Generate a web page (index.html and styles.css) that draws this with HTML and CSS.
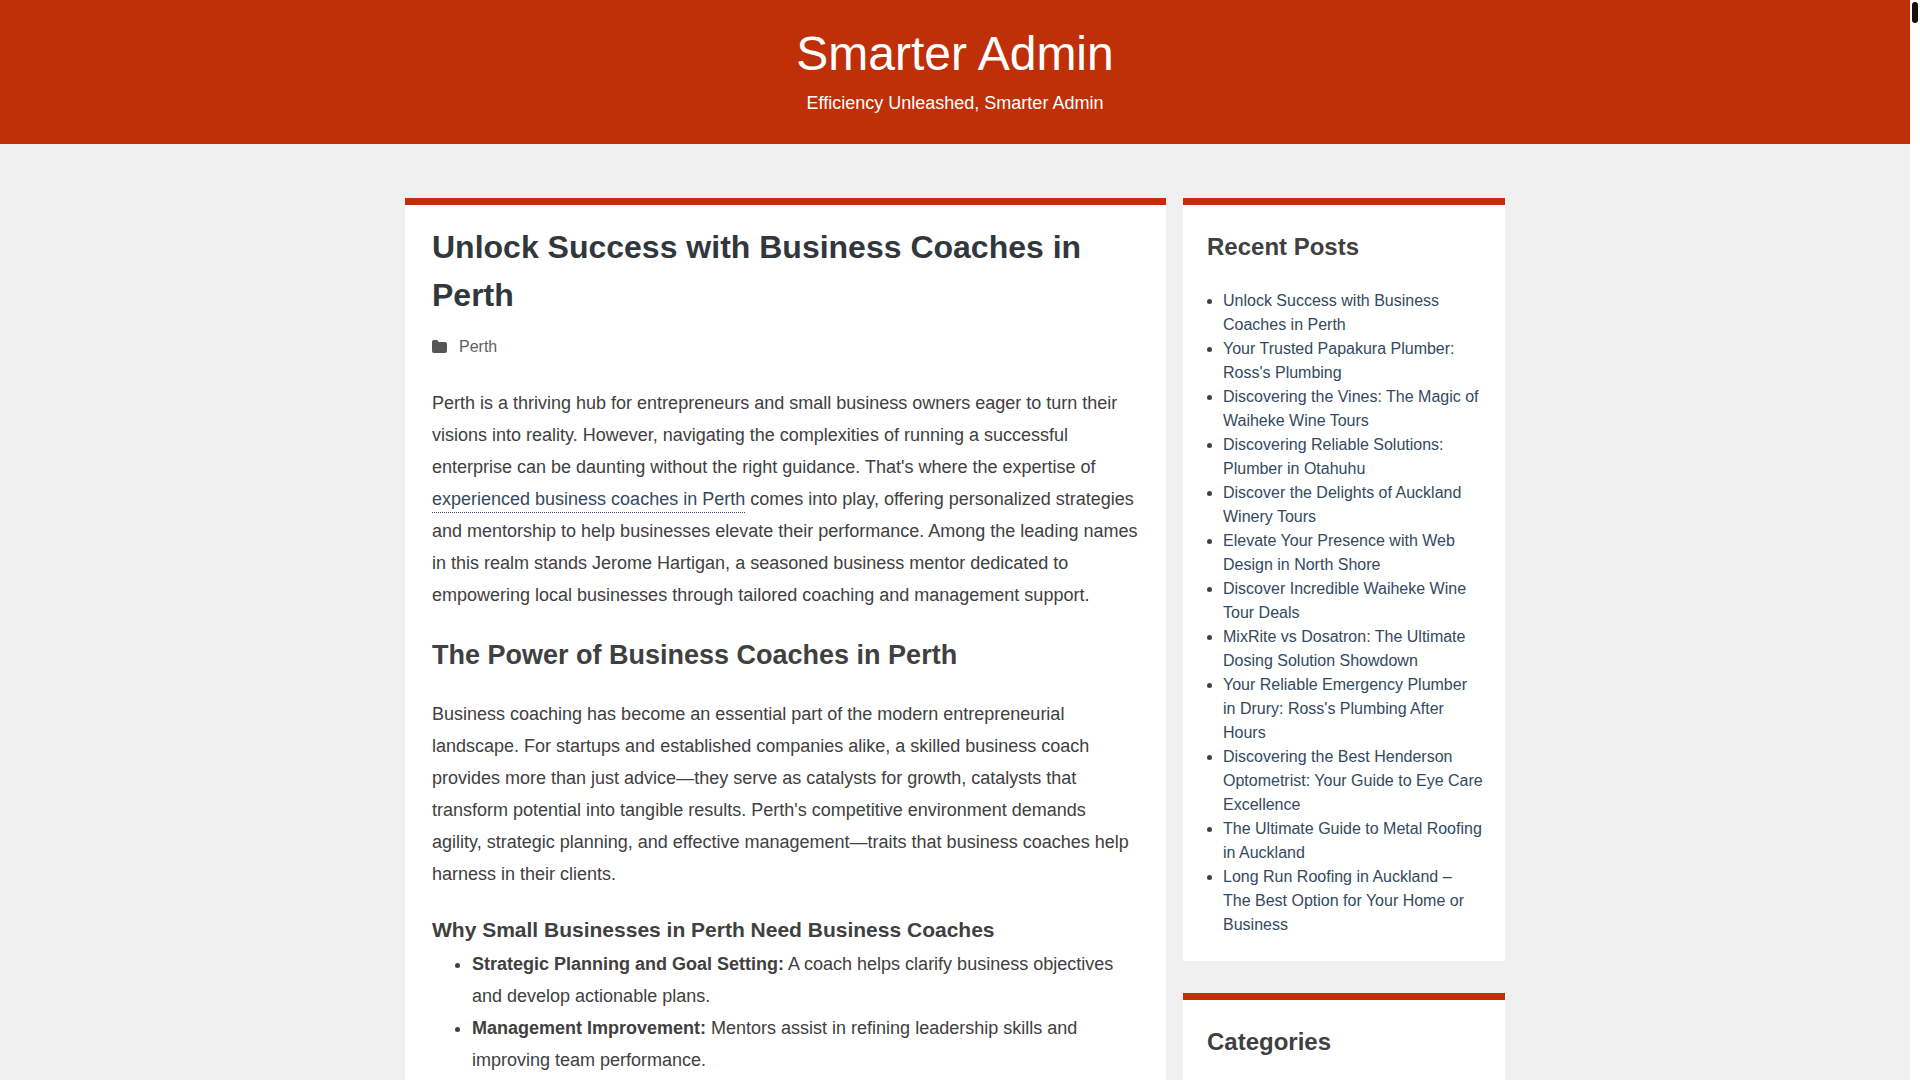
FILE: index.html
```html
<!DOCTYPE html>
<html lang="en">
<head>
    <meta charset="UTF-8">
    <meta name="viewport" content="width=device-width, initial-scale=1.0">
    <title>Unlock Success with Business Coaches in Perth - Smarter Admin</title>
    <link rel="stylesheet" href="styles.css">
</head>
<body>
    <header class="site-header">
        <a class="site-title" href="#">Smarter Admin</a>
        <p class="site-description">Efficiency Unleashed, Smarter Admin</p>
    </header>

    <div class="site-content">
        <main class="post">
            <h1 class="post-title">Unlock Success with Business Coaches in Perth</h1>
            <div class="post-meta">
                <svg class="icon-folder" viewBox="0 0 15 13" aria-hidden="true">
                    <path d="M0 2Q0 0 2 0H4.500Q6.500 0 6.500 2H13Q15 2 15 4V11Q15 13 13 13H2Q0 13 0 11Z"/>
                </svg>
                <a href="#">Perth</a>
            </div>

            <div class="post-content">
                <p>Perth is a thriving hub for entrepreneurs and small business owners eager to turn their visions into reality. However, navigating the complexities of running a successful enterprise can be daunting without the right guidance. That's where the expertise of <a href="#">experienced business coaches in Perth</a> comes into play, offering personalized strategies and mentorship to help businesses elevate their performance. Among the leading names in this realm stands Jerome Hartigan, a seasoned business mentor dedicated to empowering local businesses through tailored coaching and management support.</p>

                <h2>The Power of Business Coaches in Perth</h2>
                <p>Business coaching has become an essential part of the modern entrepreneurial landscape. For startups and established companies alike, a skilled business coach provides more than just advice—they serve as catalysts for growth, catalysts that transform potential into tangible results. Perth's competitive environment demands agility, strategic planning, and effective management—traits that business coaches help harness in their clients.</p>

                <h3>Why Small Businesses in Perth Need Business Coaches</h3>
                <ul>
                    <li><strong>Strategic Planning and Goal Setting:</strong> A coach helps clarify business objectives and develop actionable plans.</li>
                    <li><strong>Management Improvement:</strong> Mentors assist in refining leadership skills and improving team performance.</li>
                </ul>
            </div>
        </main>

        <aside class="sidebar">
            <section class="widget">
                <h2 class="widget-title">Recent Posts</h2>
                <ul>
                    <li><a href="#">Unlock Success with Business Coaches in Perth</a></li>
                    <li><a href="#">Your Trusted Papakura Plumber: Ross's Plumbing</a></li>
                    <li><a href="#">Discovering the Vines: The Magic of Waiheke Wine Tours</a></li>
                    <li><a href="#">Discovering Reliable Solutions: Plumber in Otahuhu</a></li>
                    <li><a href="#">Discover the Delights of Auckland Winery Tours</a></li>
                    <li><a href="#">Elevate Your Presence with Web Design in North Shore</a></li>
                    <li><a href="#">Discover Incredible Waiheke Wine Tour Deals</a></li>
                    <li><a href="#">MixRite vs Dosatron: The Ultimate Dosing Solution Showdown</a></li>
                    <li><a href="#">Your Reliable Emergency Plumber in Drury: Ross's Plumbing After Hours</a></li>
                    <li><a href="#">Discovering the Best Henderson Optometrist: Your Guide to Eye Care Excellence</a></li>
                    <li><a href="#">The Ultimate Guide to Metal Roofing in Auckland</a></li>
                    <li><a href="#">Long Run Roofing in Auckland – The Best Option for Your Home or Business</a></li>
                </ul>
            </section>
            <section class="widget">
                <h2 class="widget-title">Categories</h2>
            </section>
        </aside>
    </div>

    <div class="scrollbar" aria-hidden="true">
        <div class="scrollbar-thumb"></div>
    </div>
</body>
</html>
```
FILE: styles.css
```css
* {
    box-sizing: border-box;
}

body {
    display: flex;
    flex-direction: column;
    height: 100vh;
    margin: 0;
    padding-right: 10px;
    overflow: hidden;
    background-color: #f0f0f0;
    color: #404040;
    font-family: "Liberation Sans", Arial, sans-serif;
    font-size: 16px;
    line-height: 24px;
}

a {
    color: #34495e;
    text-decoration: none;
}

h1, h2, h3, p, ul {
    margin: 0;
}

/* Header */
.site-header {
    flex-shrink: 0;
    padding: 18px 20px 28px;
    background-color: #bf3008;
    color: #fff;
    text-align: center;
}

.site-title {
    display: block;
    color: #fff;
    font-size: 48px;
    line-height: 72px;
}

.site-description {
    font-size: 18px;
    line-height: 26px;
}

/* Layout */
.site-content {
    flex: 1 0 auto;
    display: grid;
    grid-template-columns: minmax(0, 1fr) 322px;
    gap: 17px;
    width: 100%;
    max-width: 1100px;
    margin: 0 auto;
    padding-top: 54px;
}

/* Post */
.post {
    padding: 18px 27px 0;
    border-top: 7px solid #bf3008;
    background-color: #fff;
}

.post-title {
    color: #31373c;
    font-size: 32px;
    line-height: 48px;
}

.post-meta {
    display: flex;
    align-items: center;
    gap: 12px;
    margin: 16px 0 28px;
}

.post-meta a {
    color: #606060;
}

.icon-folder {
    width: 15px;
    height: 13px;
    margin-bottom: 2px;
    fill: #555;
}

.post-content {
    font-size: 18px;
    line-height: 32px;
}

.post-content p {
    margin-bottom: 24px;
}

.post-content p a {
    border-bottom: 1px dotted #34495e;
    padding-bottom: 3px;
}

.post-content h2 {
    margin-bottom: 23px;
    font-size: 27px;
    line-height: 40px;
}

.post-content h3 {
    margin-bottom: 2px;
    font-size: 21px;
    line-height: 32px;
}

.post-content ul {
    padding-left: 40px;
}

/* Sidebar */
.sidebar {
    display: flex;
    flex-direction: column;
    gap: 32px;
}

.widget {
    padding: 24px 22px 24px 24px;
    border-top: 7px solid #bf3008;
    background-color: #fff;
}

.widget:last-child {
    flex-grow: 1;
}

.widget-title {
    margin-bottom: 24px;
    font-size: 24px;
    line-height: 36px;
}

.widget ul {
    padding-left: 16px;
}

/* Scrollbar */
.scrollbar {
    position: fixed;
    top: 0;
    right: 0;
    bottom: 0;
    width: 10px;
    padding: 2px;
    background-color: #fff;
}

.scrollbar-thumb {
    height: 21px;
    border-radius: 3px;
    background-color: #111;
}
```
